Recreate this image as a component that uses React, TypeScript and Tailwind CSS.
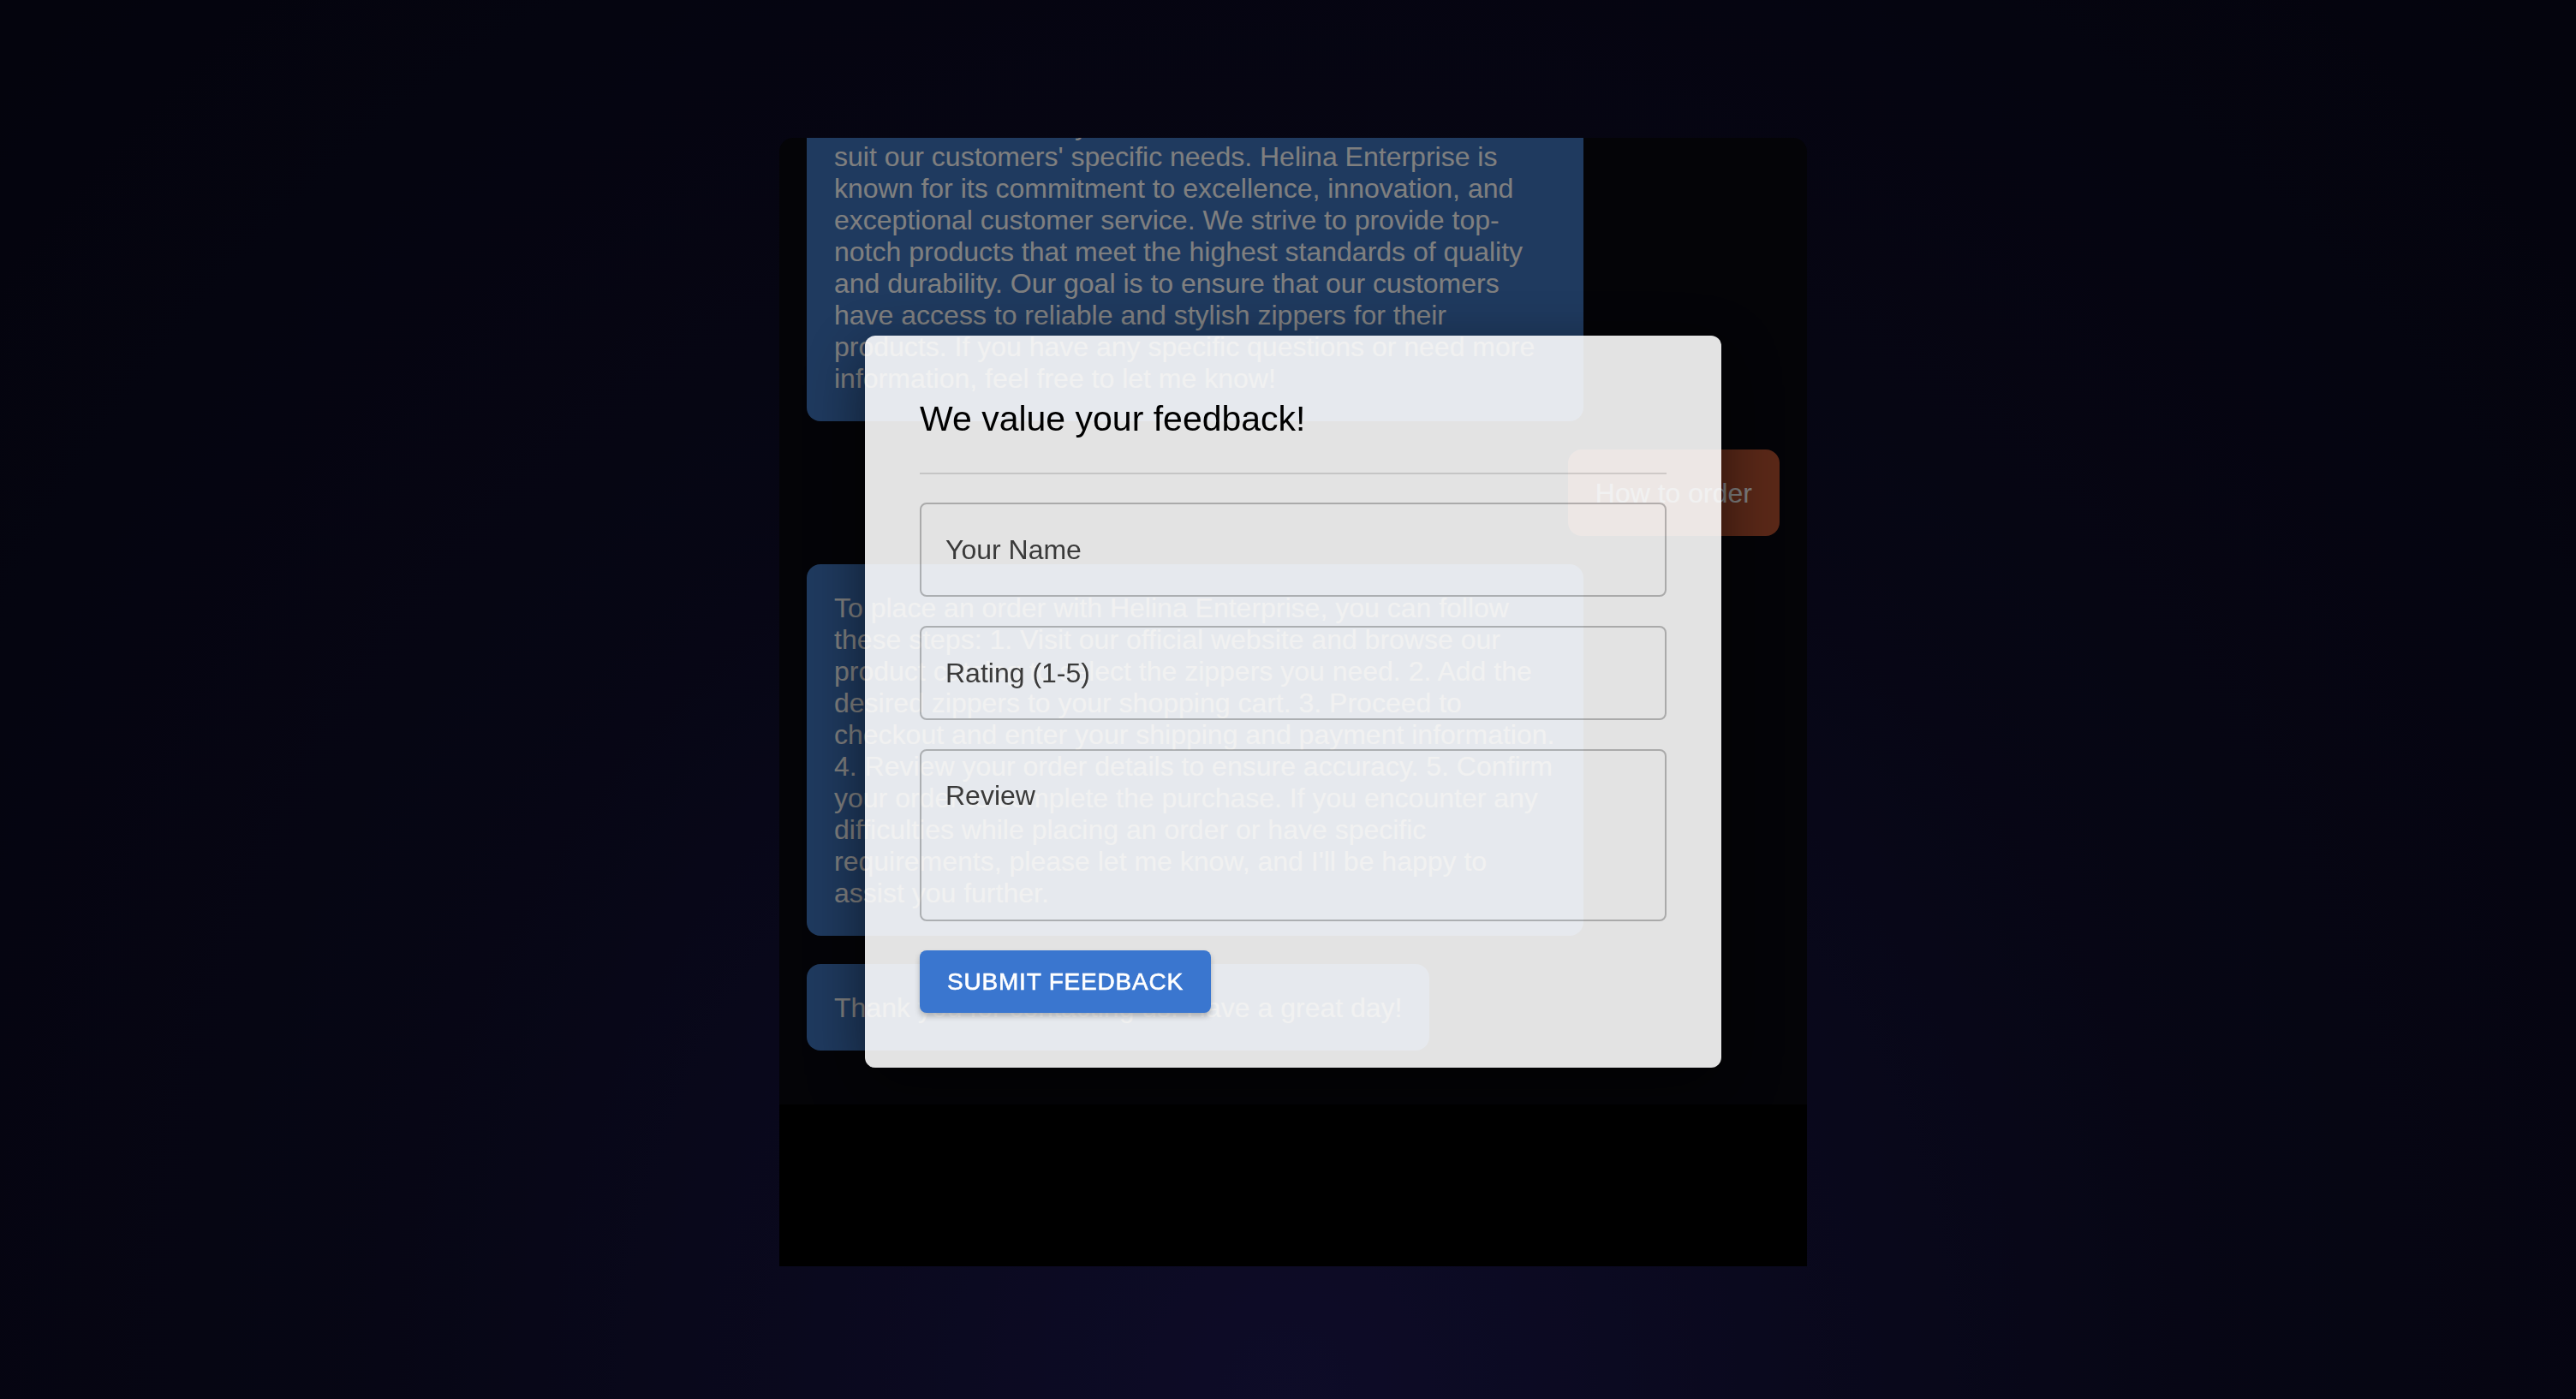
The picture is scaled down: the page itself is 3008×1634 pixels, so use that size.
const introHead =
  "Helina Enterprise is a leading manufacturer and supplier of high-quality zippers. We offer a wide range of zipper types, including metal, plastic, and invisible zippers, in a variety of sizes, colors, and styles to";
const introTail =
  "suit our customers' specific needs. Helina Enterprise is known for its commitment to excellence, innovation, and exceptional customer service. We strive to provide top-notch products that meet the highest standards of quality and durability. Our goal is to ensure that our customers have access to reliable and stylish zippers for their products. If you have any specific questions or need more information, feel free to let me know!";

const steps =
  "To place an order with Helina Enterprise, you can follow these steps: 1. Visit our official website and browse our product catalog to select the zippers you need. 2. Add the desired zippers to your shopping cart. 3. Proceed to checkout and enter your shipping and payment information. 4. Review your order details to ensure accuracy. 5. Confirm your order to complete the purchase. If you encounter any difficulties while placing an order or have specific requirements, please let me know, and I'll be happy to assist you further.";

function BotBubble({ children }: { children: React.ReactNode }) {
  return (
    <div className="self-start max-w-[907px] rounded-[16px] bg-[#3e74be] px-[32px] pt-[33px] pb-[31px] text-[32px] leading-[37px] text-white">
      {children}
    </div>
  );
}

function UserBubble({ text }: { text: string }) {
  return (
    <div className="self-end rounded-[16px] bg-[#b45030] px-[32px] pt-[33px] pb-[31px] text-[32px] leading-[37px] text-white">
      {text}
    </div>
  );
}

const field =
  "rounded-[8px] border-2 border-black/25 bg-transparent px-[28px] text-[32px] text-[#222] outline-none placeholder:text-[#3a3a3a]";

function FeedbackDialog() {
  return (
    <div className="flex w-[1000px] flex-col rounded-[12px] bg-white/[0.89] p-[64px] shadow-[0_22px_70px_rgba(0,0,0,0.55)]">
      <h2 className="pt-[2px] text-[41px] leading-[62px] text-black">We value your feedback!</h2>
      <div className="mt-[32px] h-[2px] bg-black/[0.13]" />
      <div className="mt-[33px] flex flex-col gap-[34px]">
        <input placeholder="Your Name" className={`h-[110px] ${field}`} />
        <input placeholder="Rating (1-5)" className={`h-[110px] ${field}`} />
        <textarea placeholder="Review" className={`h-[201px] resize-none pt-[34px] leading-[37px] ${field}`} />
        <button className="h-[73px] self-start rounded-[8px] bg-[#3a76cf] px-[32px] text-[28px] uppercase tracking-[0.8px] text-white shadow-[0_4px_6px_rgba(0,0,0,0.25)] [-webkit-text-stroke:0.6px_white]">
          Submit feedback
        </button>
      </div>
    </div>
  );
}

export default function App() {
  return (
    <div className="relative min-h-screen w-full overflow-hidden bg-[radial-gradient(ellipse_at_50%_100%,#1c1850_0%,#0e0d2a_50%,#08081a_100%)] font-['Liberation_Sans',Arial,sans-serif]">
      <div className="ml-[910px] flex w-[1200px] flex-col pt-[161px]">
        <div className="flex h-[1129px] flex-col justify-end gap-[33px] overflow-hidden rounded-t-[16px] bg-[#08080f] px-[32px] pb-[63px]">
          <BotBubble>
            {introHead}
            <br />
            {introTail}
          </BotBubble>
          <UserBubble text="How to order" />
          <BotBubble>{steps}</BotBubble>
          <BotBubble>Thank you for contacting us. Have a great day!</BotBubble>
        </div>
        <div className="h-[189px] bg-black" />
      </div>

      <div className="fixed inset-0 flex items-center justify-center bg-black/50 pl-[12px] pt-[5px]">
        <FeedbackDialog />
      </div>
    </div>
  );
}
